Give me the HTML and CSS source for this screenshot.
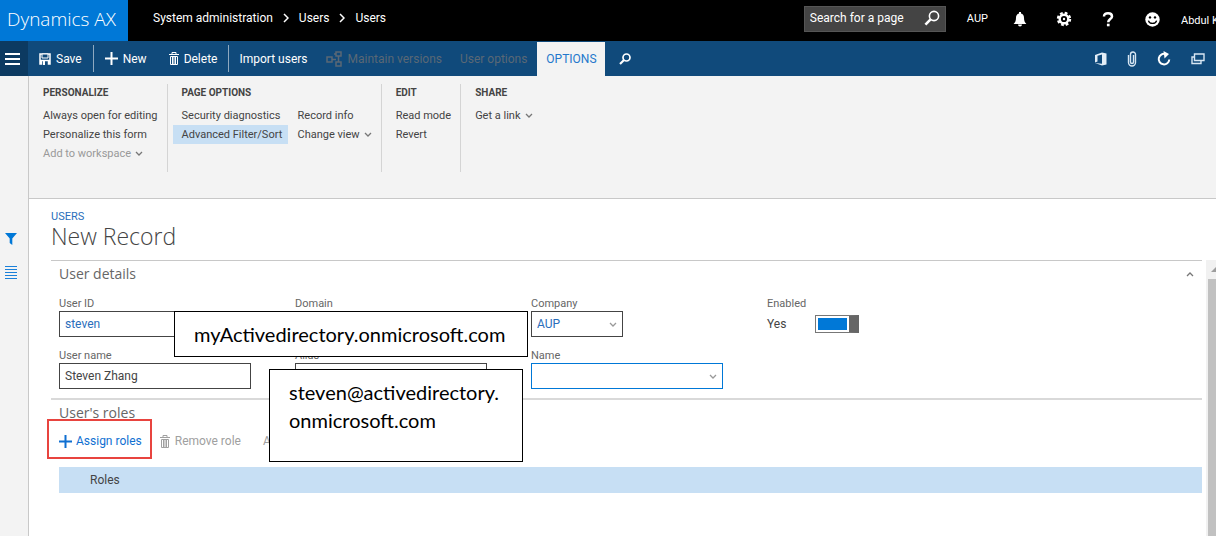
FILE: index.html
```
<!DOCTYPE html>
<html lang="en">
<head>
    <meta charset="utf-8">
    <title>Dynamics AX - Users</title>
    <link rel="stylesheet" href="styles.css">
</head>
<body>
    <!-- Top bar -->
    <header class="topbar">
        <a href="#" class="brand">Dynamics AX</a>
        <nav class="breadcrumb">
            <a href="#">System administration</a>
            <svg width="6" height="10" viewBox="0 0 6 10"><path d="M1 1l4 4-4 4"/></svg>
            <a href="#">Users</a>
            <svg width="6" height="10" viewBox="0 0 6 10"><path d="M1 1l4 4-4 4"/></svg>
            <a href="#">Users</a>
        </nav>
        <div class="search">
            <input type="text" placeholder="Search for a page" aria-label="Search for a page">
            <button aria-label="Search">
                <svg width="16" height="16" viewBox="0 0 16 16"><circle cx="10" cy="6" r="4.6" fill="none" stroke="#fff" stroke-width="1.6"/><path d="M6.6 9.4L1.4 14.6" stroke="#fff" stroke-width="2.6"/></svg>
            </button>
        </div>
        <button class="company">AUP</button>
        <div class="top-icons">
            <button aria-label="Notifications">
                <svg width="14" height="15" viewBox="0 0 14 15" fill="#fff"><path d="M6 0h2v1.6c2 .5 3 2 3 4.2 0 3 .8 4.6 2.4 6.2H.6C2.200 10.400 3 8.800 3 5.800c0-2.200 1-3.700 3-4.200z"/><path d="M5 12.600h4a2 2 0 0 1-4 0z"/></svg>
            </button>
            <button aria-label="Settings">
                <svg width="16" height="16" viewBox="0 0 16 16"><circle cx="8" cy="8" r="6" fill="none" stroke="#fff" stroke-width="2.400" stroke-dasharray="2.700 2.012"/><circle cx="8" cy="8" r="4.300" fill="none" stroke="#fff" stroke-width="2.400"/><circle cx="8" cy="8" r="1.200" fill="#fff"/></svg>
            </button>
            <button aria-label="Help">
                <svg width="12" height="15" viewBox="0 0 12 15"><path d="M2 4.600C2 2.300 3.500 1.300 6 1.300s4 1.100 4 3.100c0 2.500-3.800 2.800-3.800 5.800" fill="none" stroke="#fff" stroke-width="2.500"/><path d="M4.900 11.700h2.700v2.600H4.900z" fill="#fff"/></svg>
            </button>
            <button aria-label="Feedback">
                <svg width="15" height="15" viewBox="0 0 15 15"><circle cx="7.500" cy="7.500" r="7.200" fill="#fff"/><circle cx="5" cy="5.400" r="1.200"/><circle cx="10" cy="5.400" r="1.200"/><path d="M3.400 8.600c1 3.800 7.200 3.800 8.200 0" fill="none" stroke="#000" stroke-width="1.300"/></svg>
            </button>
        </div>
        <a href="#" class="account">Abdul K</a>
    </header>

    <!-- Action bar -->
    <div class="actionbar">
        <button class="menu" aria-label="Menu"><svg width="15" height="12" viewBox="0 0 15 12"><path d="M0 1h15M0 6h15M0 11h15" stroke="#fff" stroke-width="2"/></svg></button>
        <div class="group">
            <button>
                <svg width="12" height="12" viewBox="0 0 12 12"><path d="M1 1h10v10h-1.500V7.500h-7V11H1z" fill="none" stroke="#fff" stroke-width="1.500"/><path d="M3 1h6v4H3z" fill="#104a7b" stroke="#fff"/><path d="M4 8h2v4H4z" fill="#fff"/></svg>
                Save
            </button>
        </div>
        <div class="group">
            <button>
                <svg width="13" height="13" viewBox="0 0 13 13"><path d="M6.500 0v13M0 6.500h13" stroke="#fff" stroke-width="2"/></svg>
                New
            </button>
            <button>
                <svg width="10" height="13" viewBox="0 0 10 13" fill="none" stroke="#fff"><path d="M0 2.500h10M3 2V.5h4V2M1.500 4.500v8h7v-8zM3.500 5v7M6.500 5v7M5 5v7"/></svg>
                Delete
            </button>
        </div>
        <div class="group last">
            <button>Import users</button>
            <button disabled>
                <svg width="17" height="16" viewBox="0 0 17 16" fill="none" stroke="#5a6875" stroke-width="1.500"><path d="M1 6h5v5H1zM10 1h5v4h-5zM10 11h5v4h-5zM6 8.500h4M8 3h2M12.500 5v6"/></svg>
                Maintain versions
            </button>
            <button disabled>User options</button>
        </div>
        <button class="tab">OPTIONS</button>
        <button class="find" aria-label="Find action"><svg width="12" height="12" viewBox="0 0 12 12"><circle cx="7.500" cy="4.500" r="3.500" fill="none" stroke="#fff" stroke-width="1.700"/><path d="M5 7L1 11" stroke="#fff" stroke-width="2.200"/></svg></button>
        <div class="bar-icons">
            <button aria-label="Open in Office"><svg width="12" height="14" viewBox="0 0 12 14"><path d="M0 3L7 .5 11.500 1.500v11L7 13.500 0 11l7 .8V2.600L2.500 3.800v5.700L0 10.500z" fill="#e4eef7"/></svg></button>
            <button aria-label="Attachments"><svg width="10" height="16" viewBox="0 0 10 16" fill="none" stroke="#d7e6f3" stroke-width="1.400"><path d="M1.500 4v7.500a3.500 3.500 0 0 0 7 0v-8a2.500 2.500 0 0 0-5 0v7.500a1.500 1.500 0 0 0 3 0V4"/></svg></button>
            <button aria-label="Refresh"><svg width="14" height="15" viewBox="0 0 14 15"><path d="M8.500 3A5.300 5.300 0 1 0 12.300 8.500" fill="none" stroke="#fff" stroke-width="2"/><path d="M6.500 0l5.500 3-4.500 4.500z" fill="#fff"/></svg></button>
            <button aria-label="Open in new window"><svg width="14" height="12" viewBox="0 0 14 12" fill="none" stroke="#d7e6f3" stroke-width="1.400"><path d="M3.500 1h9.500v6.500H3.500z"/><path d="M3 4H1v6.500h9V8"/></svg></button>
        </div>
    </div>

    <div class="workspace">
        <aside class="rail">
            <button aria-label="Filter"><svg width="12" height="12" viewBox="0 0 12 12"><path d="M0 0h12L7.300 5.500V12L4.700 10V5.500z" fill="#0078d7"/></svg></button>
            <button aria-label="List"><svg width="12" height="13" viewBox="0 0 12 13"><path d="M0 .5h12M0 3.500h12M0 6.500h12M0 9.500h12M0 12.500h12" stroke="#1a80d9"/></svg></button>
        </aside>

        <main class="main">
            <!-- Options ribbon -->
            <div class="ribbon">
                <section>
                    <h2>PERSONALIZE</h2>
                    <button>Always open for editing</button>
                    <button>Personalize this form</button>
                    <button disabled>Add to workspace <svg width="8" height="5" viewBox="0 0 8 5"><path d="M1 1l3 3 3-3"/></svg></button>
                </section>
                <section class="page-options">
                    <h2>PAGE OPTIONS</h2>
                    <button>Security diagnostics</button>
                    <button>Record info</button>
                    <button class="selected">Advanced Filter/Sort</button>
                    <button>Change view <svg width="8" height="5" viewBox="0 0 8 5"><path d="M1 1l3 3 3-3"/></svg></button>
                </section>
                <section>
                    <h2>EDIT</h2>
                    <button>Read mode</button>
                    <button>Revert</button>
                </section>
                <section>
                    <h2>SHARE</h2>
                    <button>Get a link <svg width="8" height="5" viewBox="0 0 8 5"><path d="M1 1l3 3 3-3"/></svg></button>
                </section>
            </div>

            <div class="page-head">
                <a href="#">USERS</a>
                <h1>New Record</h1>
            </div>

            <div class="body">
                <div class="sections">
                    <section class="details">
                        <div class="section-head">
                            <h3>User details</h3>
                            <button aria-label="Collapse"><svg width="8" height="5" viewBox="0 0 8 5"><path d="M1 4l3-3 3 3"/></svg></button>
                        </div>
                        <div class="fields">
                            <div class="field">
                                <label for="userId">User ID</label>
                                <input type="text" id="userId" class="link" value="steven">
                            </div>
                            <div class="field">
                                <label for="domain">Domain</label>
                                <input type="text" id="domain">
                            </div>
                            <div class="field">
                                <label for="company">Company</label>
                                <div class="select short">
                                    <select id="company" class="link"><option>AUP</option></select>
                                    <svg width="8" height="5" viewBox="0 0 8 5"><path d="M1 1l3 3 3-3"/></svg>
                                </div>
                            </div>
                            <div class="field">
                                <label for="enabled">Enabled</label>
                                <div class="switch">
                                    <span>Yes</span>
                                    <input type="checkbox" id="enabled" checked>
                                </div>
                            </div>
                            <div class="field">
                                <label for="userName">User name</label>
                                <input type="text" id="userName" value="Steven Zhang">
                            </div>
                            <div class="field">
                                <label for="alias">Alias</label>
                                <input type="text" id="alias">
                            </div>
                            <div class="field">
                                <label for="name">Name</label>
                                <div class="select">
                                    <select id="name" class="active"><option></option></select>
                                    <svg width="8" height="5" viewBox="0 0 8 5"><path d="M1 1l3 3 3-3"/></svg>
                                </div>
                            </div>
                            <!-- Notes over the fields -->
                            <div class="note note-domain">myActivedirectory.onmicrosoft.com</div>
                            <div class="note note-alias">steven@activedirectory.<br>onmicrosoft.com</div>
                        </div>
                    </section>

                    <section class="roles">
                        <h3>User's roles</h3>
                        <div class="role-actions">
                            <button class="assign">
                                <svg width="13" height="13" viewBox="0 0 13 13"><path d="M6.500 0v13M0 6.500h13" stroke="#0f6fd1" stroke-width="2"/></svg>
                                Assign roles
                            </button>
                            <button disabled>
                                <svg width="10" height="13" viewBox="0 0 10 13" fill="none" stroke="#a0a0a0"><path d="M0 2.500h10M3 2V.5h4V2M1.500 4.500v8h7v-8zM3.500 5v7M6.500 5v7M5 5v7"/></svg>
                                Remove role
                            </button>
                            <button disabled>A</button>
                        </div>
                        <table class="role-table">
                            <thead><tr><th>Roles</th></tr></thead>
                        </table>
                    </section>
                </div>
                <div class="scrollbar">
                    <svg width="10" height="19" viewBox="0 0 10 19"><path d="M5 12l6-6v6z" fill="#9d9d9d"/></svg>
                    <div class="thumb"></div>
                </div>
            </div>
        </main>
    </div>
</body>
</html>
```
FILE: styles.css
```
:root {
    --blue: #0078d7;
    --bar: #104a7b;
    --bar-dark: #0c3a61;
    --grey: #f3f3f3;
    --line: #c8c8c8;
    --select: #c7dff4;
    --text: #444;
}

* {
    box-sizing: border-box;
}

body {
    margin: 0;
    height: 100vh;
    display: flex;
    flex-direction: column;
    overflow: hidden;
    background: #fff;
    color: var(--text);
    font-family: Roboto, "Noto Sans", sans-serif;
    font-size: 11px;
}

button, input, select {
    font: inherit;
    color: inherit;
}

button {
    display: flex;
    align-items: center;
    padding: 0;
    border: none;
    background: none;
    white-space: nowrap;
}

a {
    color: inherit;
    text-decoration: none;
}

h1, h2, h3 {
    margin: 0;
    font-weight: normal;
}

h1, h3, .brand {
    font-family: "Open Sans", "Noto Sans", sans-serif;
}

svg {
    flex: none;
}

/* Top bar */
.topbar {
    display: flex;
    align-items: center;
    flex: none;
    height: 41px;
    background: #000;
    color: #fff;
}

.brand {
    width: 128px;
    padding: 0 0 2px 7px;
    background: var(--blue);
    font-size: 19px;
    font-weight: 300;
    line-height: 39px;
    white-space: nowrap;
}

.breadcrumb {
    display: flex;
    align-items: center;
    gap: 10px;
    margin-left: 25px;
    padding-bottom: 5px;
    font-size: 12px;
}

.breadcrumb svg {
    fill: none;
    stroke: #fff;
    stroke-width: 1.5;
}

.search {
    display: flex;
    align-items: center;
    width: 142px;
    height: 26px;
    margin-left: auto;
    margin-bottom: 4px;
    padding: 0 5px 2px;
    border: 1px solid #555;
    background: #444;
}

.search input {
    flex: 1;
    min-width: 0;
    padding: 0;
    border: none;
    background: none;
    font-size: 12px;
}

.search input::placeholder {
    color: #fff;
}

.company {
    margin: 0 24px 5px 21px;
}

.top-icons {
    display: flex;
    margin-bottom: 3px;
}

.top-icons button {
    justify-content: center;
    width: 44px;
}

.top-icons button:first-child {
    width: 16px;
    margin-right: 14px;
}

.account {
    width: 35px;
    margin-left: 7px;
    overflow: hidden;
    white-space: nowrap;
}

/* Action bar */
.actionbar {
    display: flex;
    flex: none;
    height: 35px;
    background: var(--bar);
    color: #fff;
    font-size: 12px;
}

.menu {
    justify-content: center;
    width: 28px;
    padding-right: 4px;
    background: var(--bar-dark);
}

.group {
    display: flex;
    gap: 22px;
    margin: 4px 0;
    padding: 0 11px;
    border-right: 1px solid #8fa9c0;
}

.group.last {
    gap: 18px;
    padding: 0 10px;
    border: none;
}

.group button {
    gap: 5px;
}

.group button:disabled {
    color: #5a6875;
}

.tab {
    width: 68px;
    justify-content: center;
    margin-top: 1px;
    background: var(--grey);
    color: #2478cc;
}

.find {
    padding-left: 14px;
}

.bar-icons {
    display: flex;
    gap: 20px;
    margin-left: auto;
    padding-right: 11px;
}

/* Page */
.workspace {
    display: flex;
    flex: 1;
    min-height: 0;
}

.rail {
    display: flex;
    flex-direction: column;
    gap: 21px;
    width: 29px;
    padding: 157px 0 0 5px;
    border-right: 1px solid var(--line);
    background: var(--grey);
}

.main {
    display: flex;
    flex: 1;
    flex-direction: column;
    min-width: 0;
}

/* Ribbon */
.ribbon {
    display: flex;
    height: 123px;
    padding: 8px 0 0 14px;
    border-bottom: 1px solid var(--line);
    background: var(--grey);
}

.ribbon section {
    display: grid;
    grid-template-rows: 22px;
    grid-auto-rows: 19px;
    align-content: start;
    height: 88px;
    padding-right: 9px;
    margin-right: 14px;
    border-right: 1px solid #d4d4d4;
}

.ribbon section:last-child {
    border: none;
}

.ribbon h2 {
    font-size: 10px;
    font-weight: bold;
    line-height: 17px;
}

.ribbon button {
    gap: 4px;
}

.ribbon button:disabled {
    color: #999;
}

.ribbon svg,
.section-head svg,
.select svg {
    fill: none;
    stroke: #777;
    stroke-width: 1.3;
}

.ribbon .page-options {
    grid-template-columns: 116px auto;
}

.page-options h2 {
    grid-column: span 2;
}

.page-options .selected {
    margin: 0 10px 0 -9px;
    padding-left: 9px;
    background: var(--select);
}

/* Page title */
.page-head {
    padding: 10px 22px 12px;
}

.page-head a {
    display: block;
    color: #2a6ebb;
    line-height: 16px;
}

.page-head h1 {
    font-size: 23px;
    font-weight: 300;
    line-height: 23px;
}

.body {
    display: flex;
    flex: 1;
    min-height: 0;
}

.sections {
    flex: 1;
    margin: 0 4px 0 22px;
}

/* User details */
.details {
    padding: 0 8px 9px;
    border-top: 1px solid var(--line);
    border-bottom: 2px solid #d9d9d9;
}

.section-head {
    display: flex;
    align-items: center;
    justify-content: space-between;
}

h3 {
    color: #666;
    font-size: 14px;
    line-height: 26px;
}

.fields {
    position: relative;
    display: grid;
    grid-template-columns: repeat(4, 236px);
    row-gap: 8px;
    padding-top: 6px;
}

.field label {
    display: block;
    padding-top: 4px;
    color: #666;
    line-height: 14px;
}

.field input[type="text"],
.field select {
    display: block;
    width: 192px;
    height: 26px;
    padding: 0 5px;
    border: 1px solid #444;
    border-radius: 0;
    background: #fff;
    font-size: 12px;
    appearance: none;
}

.field .link {
    color: #2a6ebb;
}

.field .select {
    display: grid;
    align-items: center;
    width: 192px;
}

.field .short {
    width: 92px;
}

.select select,
.select svg {
    grid-area: 1 / 1;
}

.field .select select {
    width: 100%;
}

.select svg {
    justify-self: end;
    margin-right: 6px;
    stroke: #999;
}

.field .active {
    border-color: var(--blue);
}

.switch {
    display: flex;
    align-items: center;
    gap: 29px;
    height: 26px;
    font-size: 12px;
}

.switch input {
    width: 44px;
    height: 18px;
    margin: 0;
    padding: 2px;
    border: 1px solid #777;
    border-right: 10px solid #666;
    background: var(--blue) content-box;
    appearance: none;
}

.note {
    position: absolute;
    padding: 8px 19px;
    border: 1px solid #000;
    background: #fff;
    color: #000;
    font-family: Lato, sans-serif;
    font-size: 20px;
    line-height: 28px;
}

.note-domain {
    top: 24px;
    left: 115px;
    width: 354px;
}

.note-alias {
    top: 82px;
    left: 210px;
    width: 254px;
    height: 93px;
}

/* Roles */
.roles {
    padding-left: 8px;
}

.role-actions {
    display: flex;
    align-items: center;
    gap: 22px;
    height: 40px;
    margin-top: -7px;
    font-size: 12px;
}

.role-actions button {
    gap: 5px;
    padding-top: 4px;
}

.role-actions button:disabled {
    color: #a0a0a0;
}

.role-actions .assign {
    gap: 4px;
    height: 40px;
    margin: 0 -14px 0 -12px;
    padding: 4px 8px 0 10px;
    border: 2px solid #e8443f;
    color: #0f6fd1;
}

.role-table {
    width: 100%;
    margin-top: 8px;
    border-collapse: collapse;
    background: var(--select);
    font-size: 12px;
}

.role-table th {
    height: 26px;
    padding: 0 31px;
    font-weight: normal;
    text-align: left;
}

/* Scrollbar */
.scrollbar {
    display: flex;
    flex-direction: column;
    width: 10px;
    overflow: hidden;
    background: #f1f1f1;
}

.thumb {
    flex: 1;
    margin-left: 2px;
    background: #c1c1c1;
}
```
